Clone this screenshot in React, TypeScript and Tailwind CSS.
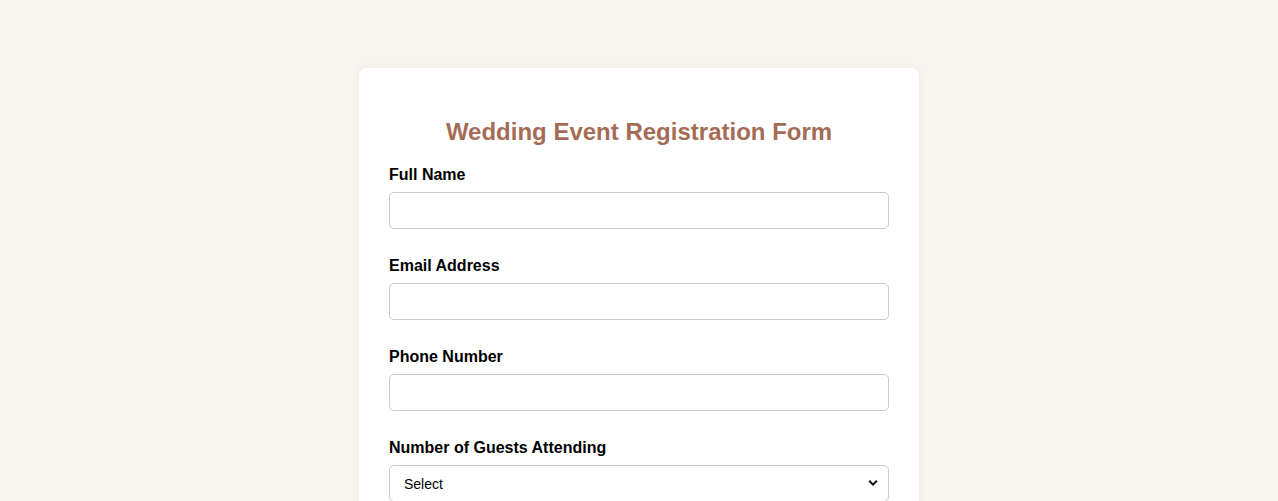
import React from 'react';

const fields = [
    { label: 'Full Name', type: 'text' },
    { label: 'Email Address', type: 'email' },
    { label: 'Phone Number', type: 'tel' },
];

export default function App() {
    return (
        <div className="min-h-screen bg-[#f9f6f1] font-['Liberation_Sans',Arial,sans-serif] pt-[68px]">
            <div className="mx-auto w-[560px] bg-white rounded-[8px] shadow-[0_0_10px_rgba(0,0,0,0.06)] px-[30px] pt-[30px] pb-[30px]">
                <h2 className="text-center text-[24px] leading-[28px] font-bold text-[#a56c55] mt-[20px] mb-[20px]">
                    Wedding Event Registration Form
                </h2>
                <form>
                    {fields.map(f => (
                        <div key={f.label} className="mb-[28px]">
                            <label className="block text-[16px] leading-[18px] font-bold text-black mb-[8px]">
                                {f.label}
                            </label>
                            <input
                                type={f.type}
                                className="block w-full h-[37px] border border-[#cccccc] rounded-[5px] px-[10px] text-[14px] outline-none"
                            />
                        </div>
                    ))}
                    <div className="mb-[28px]">
                        <label className="block text-[16px] leading-[18px] font-bold text-black mb-[8px]">
                            Number of Guests Attending
                        </label>
                        <div className="relative">
                            <select className="block w-full h-[37px] border border-[#cccccc] rounded-[5px] pl-[14px] pr-[10px] pt-[2px] text-[14px] text-black bg-white appearance-none outline-none">
                                <option>Select</option>
                                <option>1</option>
                                <option>2</option>
                                <option>3</option>
                                <option>4</option>
                            </select>
                            <svg className="absolute right-[11px] top-[14px] w-[10px] h-[8px]" viewBox="0 0 10 8">
                                <path d="M1.2 1.8 L5 5.6 L8.8 1.8" fill="none" stroke="#111" strokeWidth="2" />
                            </svg>
                        </div>
                    </div>
                </form>
            </div>
        </div>
    );
}
